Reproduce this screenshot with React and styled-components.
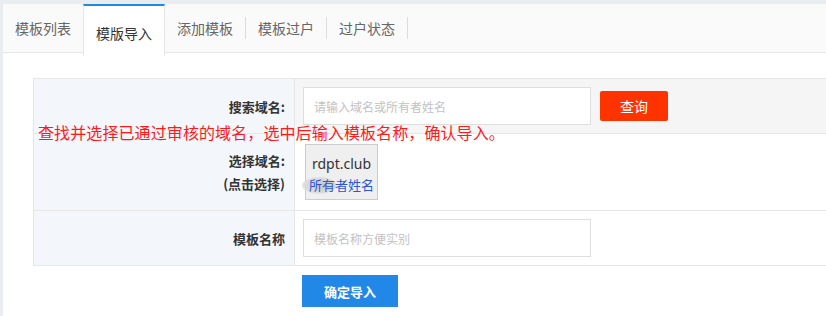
import React from "react";
import styled, { createGlobalStyle, css } from "styled-components";

const GlobalStyle = createGlobalStyle`
  html, body { margin: 0; padding: 0; }
  body {
    background: #e9edf2;
    overflow: hidden;
    font-family: "Noto Sans", "Noto Sans CJK SC", sans-serif;
  }
`;

const Page = styled.div`
  padding: 4px 0 0 3px;
`;

const Panel = styled.div`
  background: #ffffff;
  min-height: 320px;
`;

const TabBar = styled.div`
  display: flex;
  height: 48px;
  background: #fafafa;
  border-bottom: 1px solid #e6e6e6;
`;

const Tab = styled.div`
  position: relative;
  display: flex;
  align-items: center;
  padding: 0 12px;
  font-size: 14px;
  color: #666;
  font-family: "Noto Sans CJK SC", sans-serif;
  cursor: pointer;
  ${(p) =>
    p.$sep &&
    css`
      padding-right: 13px;
      &::after {
        content: "";
        position: absolute;
        right: 0;
        top: 13px;
        width: 1px;
        height: 22px;
        background: #dcdcdc;
      }
    `}
  ${(p) =>
    p.$active &&
    css`
      background: #ffffff;
      color: #333;
      height: 47px;
      padding-top: 3px;
      border-top: 2px solid #1e88e5;
      border-left: 1px solid #e6e6e6;
      border-right: 1px solid #e6e6e6;
      margin-bottom: -1px;
    `}
`;

const Content = styled.div`
  padding: 25px 0 0 30px;
`;

const Table = styled.div`
  position: relative;
  width: 900px;
  border-top: 1px solid #e6e6e6;
  border-left: 1px solid #e6e6e6;
`;

const Row = styled.div`
  display: grid;
  grid-template-columns: 261px 1fr;
  height: ${(p) => p.$h}px;
  border-bottom: 1px solid #e6e6e6;
`;

const Label = styled.div`
  display: flex;
  flex-direction: column;
  justify-content: center;
  align-items: flex-end;
  padding-right: 9px;
  background: #f3f6fa;
  border-right: 1px solid #e6e6e6;
  font-family: "Noto Sans CJK SC", sans-serif;
  font-size: 13px;
  font-weight: 700;
  color: #333;
  line-height: 23px;
  text-align: right;
`;

const Cell = styled.div`
  display: flex;
  align-items: ${(p) => (p.$top ? "flex-start" : "center")};
  padding: ${(p) => (p.$top ? "10px 0 0 10px" : "0 0 0 8px")};
  background: ${(p) => (p.$grey ? "#f5f5f5" : "#ffffff")};
`;

const Input = styled.input`
  box-sizing: border-box;
  width: 288px;
  height: 38px;
  border: 1px solid #dedede;
  background: #fff;
  padding: 0 10px;
  font-family: "Noto Sans CJK SC", sans-serif;
  font-size: 12px;
  color: #333;
  outline: none;
  &::placeholder { color: #c2c2c2; }
`;

const QueryButton = styled.button`
  margin-left: 9px;
  width: 68px;
  height: 30px;
  border: none;
  border-radius: 2px;
  background: #ff3300;
  color: #fff;
  font-family: "Noto Sans CJK SC", sans-serif;
  font-size: 14px;
  cursor: pointer;
`;

const Chip = styled.div`
  position: relative;
  box-sizing: border-box;
  width: 73px;
  height: 56px;
  padding: 8px 0 0;
  background: #efefef;
  border: 1px solid #cccccc;
  text-align: center;
  cursor: pointer;
`;

const Smudge = styled.span`
  position: absolute;
  left: -4px;
  top: 32px;
  width: 34px;
  height: 17px;
  border-radius: 50%;
  background: radial-gradient(ellipse at 60% 50%, #c6c6c6 0%, #d4d4d4 40%, rgba(222,222,222,0.7) 75%, rgba(230,230,230,0) 100%);
  z-index: 0;
`;

const Domain = styled.div`
  position: relative;
  z-index: 1;
  font-family: "Noto Sans", sans-serif;
  font-size: 14px;
  line-height: 22px;
  color: #333;
`;

const Owner = styled.div`
  position: relative;
  z-index: 1;
  font-family: "Noto Sans CJK SC", sans-serif;
  font-size: 13px;
  line-height: 20px;
  color: #2b55d6;
`;

const Note = styled.div`
  position: absolute;
  left: 4px;
  top: 44px;
  font-family: "Noto Sans CJK SC", sans-serif;
  font-size: 16px;
  line-height: 18px;
  letter-spacing: 0.1px;
  color: #ff1a1a;
  white-space: nowrap;
  pointer-events: none;
`;

const Footer = styled.div`
  padding: 9px 0 0 269px;
`;

const SubmitButton = styled.button`
  width: 96px;
  height: 32px;
  border: none;
  background: #2188e8;
  color: #fff;
  font-family: "Noto Sans CJK SC", sans-serif;
  font-size: 13px;
  font-weight: 700;
  cursor: pointer;
`;

const tabs = [
  { name: "模板列表" },
  { name: "模版导入", active: true },
  { name: "添加模板", sep: true },
  { name: "模板过户", sep: true },
  { name: "过户状态", sep: true },
];

export default function App() {
  return (
    <>
      <GlobalStyle />
      <Page>
        <Panel>
          <TabBar>
            {tabs.map((t) => (
              <Tab key={t.name} $active={t.active} $sep={t.sep}>
                {t.name}
              </Tab>
            ))}
          </TabBar>
          <Content>
            <Table>
              <Row $h={54}>
                <Label>搜索域名:</Label>
                <Cell $grey>
                  <Input placeholder="请输入域名或所有者姓名" />
                  <QueryButton>查询</QueryButton>
                </Cell>
              </Row>
              <Row $h={76}>
                <Label>
                  <span>选择域名:</span>
                  <span>(点击选择)</span>
                </Label>
                <Cell $top>
                  <Chip>
                    <Smudge />
                    <Domain>rdpt.club</Domain>
                    <Owner>所有者姓名</Owner>
                  </Chip>
                </Cell>
              </Row>
              <Row $h={54}>
                <Label>模板名称</Label>
                <Cell>
                  <Input placeholder="模板名称方便实别" />
                </Cell>
              </Row>
              <Note>查找并选择已通过审核的域名，选中后输入模板名称，确认导入。</Note>
            </Table>
            <Footer>
              <SubmitButton>确定导入</SubmitButton>
            </Footer>
          </Content>
        </Panel>
      </Page>
    </>
  );
}
